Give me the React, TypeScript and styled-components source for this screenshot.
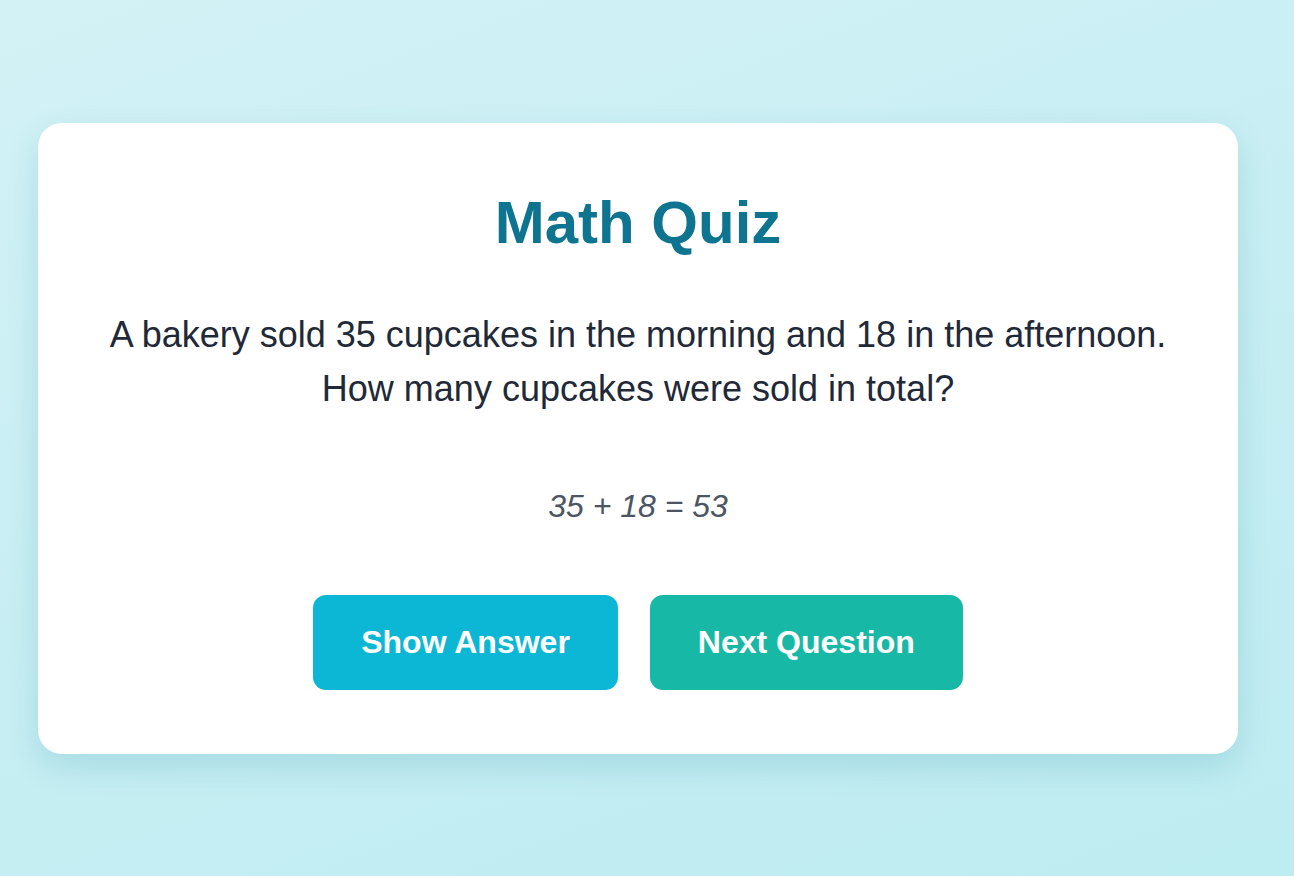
import React from "react";
import styled, { createGlobalStyle } from "styled-components";

const GlobalStyle = createGlobalStyle`
  html, body {
    margin: 0;
    padding: 0;
  }
  body {
    font-family: "Liberation Sans", Arial, Helvetica, sans-serif;
    background: linear-gradient(160deg, #d3f2f6 0%, #c6eef3 55%, #bdecf1 100%);
    min-height: 100vh;
  }
`;

const Page = styled.main`
  box-sizing: border-box;
  min-height: 100vh;
  display: flex;
  align-items: center;
  justify-content: center;
  padding: 0 18px 0 0;
`;

const Card = styled.section`
  box-sizing: border-box;
  width: 1200px;
  background: #ffffff;
  border-radius: 24px;
  padding: 64px;
  box-shadow: 0 12px 32px rgba(14, 116, 144, 0.16);
  display: flex;
  flex-direction: column;
  align-items: center;
  text-align: center;
`;

const Title = styled.h1`
  margin: 0;
  font-size: 60px;
  line-height: 72px;
  font-weight: 700;
  color: #0e7490;
`;

const Question = styled.p`
  margin: 49px 0 0;
  font-size: 36px;
  line-height: 54px;
  color: #1f2937;
`;

const Equation = styled.p`
  margin: 66px 0 0;
  font-size: 32px;
  line-height: 48px;
  font-style: italic;
  color: #4b5563;
`;

const Actions = styled.div`
  margin-top: 65px;
  display: flex;
  gap: 32px;
  justify-content: center;
`;

const Button = styled.button<{ $tone: "cyan" | "teal" }>`
  font-family: "Liberation Sans", Arial, Helvetica, sans-serif;
  font-size: 32px;
  font-weight: 700;
  line-height: 47px;
  color: #ffffff;
  border: none;
  border-radius: 13px;
  padding: 24px 48px;
  cursor: pointer;
  background: ${(p) => (p.$tone === "cyan" ? "#0cb7d5" : "#17b9a6")};
`;

export default function App() {
  return (
    <>
      <GlobalStyle />
      <Page>
        <Card>
          <Title>Math Quiz</Title>
          <Question>
            A bakery sold 35 cupcakes in the morning and 18 in the afternoon. How many
            cupcakes were sold in total?
          </Question>
          <Equation>35 + 18 = 53</Equation>
          <Actions>
            <Button $tone="cyan">Show Answer</Button>
            <Button $tone="teal">Next Question</Button>
          </Actions>
        </Card>
      </Page>
    </>
  );
}
